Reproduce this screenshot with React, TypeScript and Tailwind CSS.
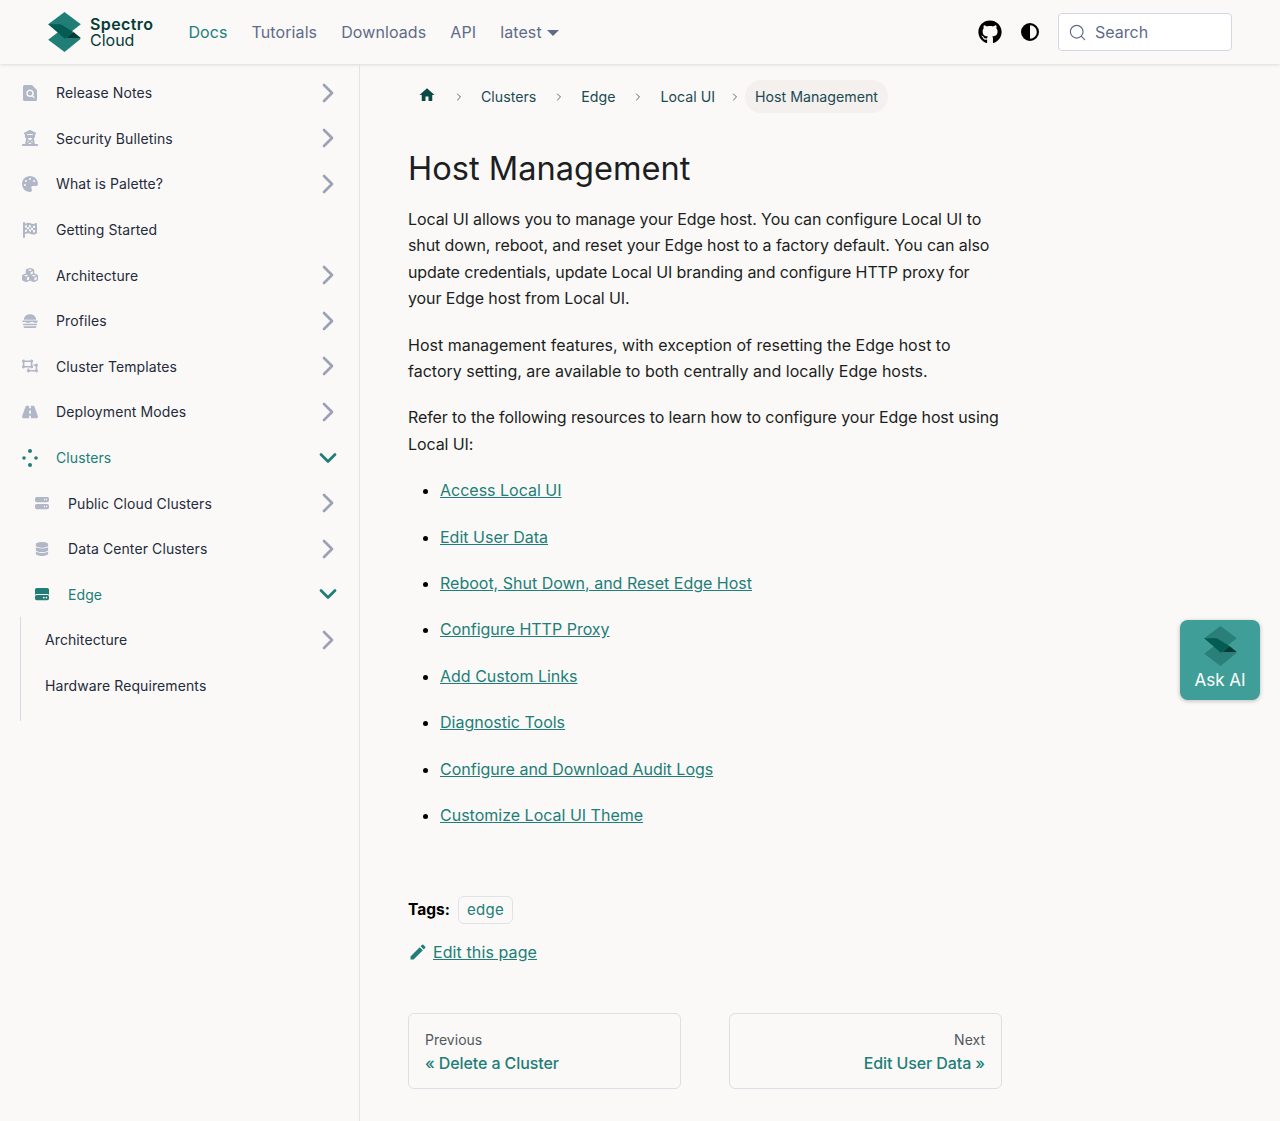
import { ChevronDown, ChevronRight, Search } from "lucide-react";
import type { IconType } from "react-icons";
import {
  FaCircleHalfStroke,
  FaCubes,
  FaDatabase,
  FaFlagCheckered,
  FaGithub,
  FaHardDrive,
  FaObjectUngroup,
  FaPalette,
  FaRoad,
  FaServer,
  FaTowerObservation,
} from "react-icons/fa6";
import { MdEdit, MdHome } from "react-icons/md";

const FONT = "font-['Inter','Noto_Sans',sans-serif]";

const ClusterDots = ({ className }: { className?: string }) => (
  <svg viewBox="0 0 16 18" className={className} fill="currentColor" preserveAspectRatio="xMidYMid meet">
    <circle cx="8" cy="2" r="2" />
    <circle cx="2" cy="9" r="1.8" />
    <circle cx="14" cy="9" r="1.8" />
    <circle cx="8" cy="16" r="2" />
  </svg>
);

const FileSearch = ({ className }: { className?: string }) => (
  <svg viewBox="0 0 14 16" className={className} fill="currentColor">
    <path
      fillRule="evenodd"
      d="M1.5 0H9l5 5v9.5a1.5 1.5 0 0 1-1.5 1.5h-11A1.5 1.5 0 0 1 0 14.5v-13A1.5 1.5 0 0 1 1.5 0ZM7 4.5a3.8 3.8 0 1 0 2.1 7l1.7 1.7 1-1-1.7-1.7A3.8 3.8 0 0 0 7 4.5Zm0 1.5a2.3 2.3 0 1 1 0 4.6A2.3 2.3 0 0 1 7 6Z"
    />
  </svg>
);

const ProfileStack = ({ className }: { className?: string }) => (
  <svg viewBox="0 0 17 16" className={className} fill="currentColor">
    <path d="M2 6.6C2 3 5 .8 8.5.8S15 3 15 6.6Z" />
    <path d="M.5 7.6h16v1.6c-1.5 1-2.7 1-4 .4-1.300-.6-2.700-.6-4 0-1.300.6-2.700.6-4 0-1.300-.6-2.700-.6-4 0Z" />
    <rect x="1" y="11" width="15" height="1.500" rx=".7" />
    <path d="M1.500 13.500h14c0 1.200-.8 2-2 2h-10c-1.200 0-2-.8-2-2Z" />
  </svg>
);

const Logo = ({ className, tone = "#217e77" }: { className?: string; tone?: string }) => (
  <svg viewBox="0 0 98 120" className={className}>
    <polygon points="49,0 98,37 49,75 0,37" fill={tone} />
    <polygon points="0,83 49,46 98,80 49,120" fill={tone} />
    <polygon points="0,37 38,37 76,60 50,80" fill="#035c54" />
    <polygon points="55,78 76,60 98,78" fill="#063c36" />
  </svg>
);

type NavItem = {
  label: string;
  icon?: IconType | typeof ClusterDots;
  state?: "closed" | "open";
  indent?: boolean;
  active?: boolean;
};

const topItems: NavItem[] = [
  { label: "Release Notes", icon: FileSearch, state: "closed" },
  { label: "Security Bulletins", icon: FaTowerObservation, state: "closed" },
  { label: "What is Palette?", icon: FaPalette, state: "closed" },
  { label: "Getting Started", icon: FaFlagCheckered },
  { label: "Architecture", icon: FaCubes, state: "closed" },
  { label: "Profiles", icon: ProfileStack, state: "closed" },
  { label: "Cluster Templates", icon: FaObjectUngroup, state: "closed" },
  { label: "Deployment Modes", icon: FaRoad, state: "closed" },
  { label: "Clusters", icon: ClusterDots, state: "open", active: true },
  { label: "Public Cloud Clusters", icon: FaServer, state: "closed", indent: true },
  { label: "Data Center Clusters", icon: FaDatabase, state: "closed", indent: true },
  { label: "Edge", icon: FaHardDrive, state: "open", indent: true, active: true },
];

const edgeItems: NavItem[] = [
  { label: "Architecture", state: "closed" },
  { label: "Hardware Requirements" },
];

const links = [
  "Access Local UI",
  "Edit User Data",
  "Reboot, Shut Down, and Reset Edge Host",
  "Configure HTTP Proxy",
  "Add Custom Links",
  "Diagnostic Tools",
  "Configure and Download Audit Logs",
  "Customize Local UI Theme",
];

const SideRow = ({ item }: { item: NavItem }) => {
  const Icon = item.icon;
  return (
    <div className={`flex h-[45.6px] items-center pr-[15px] ${item.indent ? "pl-[35px]" : item.icon ? "pl-[22px]" : "pl-[45px]"}`}>
      {Icon && (
        <span className={`flex shrink-0 ${item.indent ? "w-[33px]" : "w-[34px]"} ${item.active ? "text-[#217e77]" : "text-[#b2b7c7]"}`}>
          <Icon className={item.indent ? "h-[14px] w-[14px]" : item.label === "Clusters" ? "h-[18px] w-4" : "h-4 w-4"} />
        </span>
      )}
      <span className={`flex-1 text-[14px] tracking-[0.1px] ${item.active ? "text-[#217e77]" : "text-[#252b3a]"}`}>{item.label}</span>
      {item.state === "closed" && <ChevronRight className="h-8 w-8 text-[#9da1b5]" strokeWidth={2} />}
      {item.state === "open" && <ChevronDown className="mx-[2px] h-7 w-7 text-[#217e77]" strokeWidth={2.4} />}
    </div>
  );
};

const Crumb = ({ children }: { children: string }) => (
  <>
    <ChevronRight className="mx-[16.5px] h-3 w-3 text-[#5f6368]" />
    <span className="text-[14.2px] text-[#1b4a52]">{children}</span>
  </>
);

export default function App() {
  return (
    <div className={`relative h-[1121px] overflow-hidden bg-[#faf9f8] ${FONT}`}>
      <header className="flex h-[64px] items-center bg-[#faf9f8] pl-[48px] pr-[48px] shadow-[0_1px_3px_rgba(0,0,0,0.12)]">
        <Logo className="h-[40px] w-[33px]" />
        <div className="ml-[9px] flex flex-col text-[#063c36]">
          <span className="text-[16px] leading-[16px] font-semibold tracking-[0.4px]">Spectro</span>
          <span className="text-[16px] leading-[16px]">Cloud</span>
        </div>
        <nav className="ml-[35px] flex items-center gap-6 text-[16px] tracking-[0.1px] text-[#5f6b88]">
          <span className="text-[#217e77]">Docs</span>
          <span>Tutorials</span>
          <span>Downloads</span>
          <span>API</span>
          <span className="flex items-center gap-[5px]">
            latest
            <span className="mt-[2px] border-x-[6px] border-t-[6px] border-x-transparent border-t-[#5f6b88]" />
          </span>
        </nav>
        <div className="ml-auto flex items-center">
          <FaGithub className="h-6 w-6 text-black" />
          <FaCircleHalfStroke className="ml-[19px] h-[18px] w-[18px] text-black" />
          <div className="ml-[19px] flex h-[38px] w-[174px] items-center gap-2 rounded border border-[#d4d6e6] bg-white px-[9px] text-[16px] text-[#5f6b88]">
            <Search className="h-[19px] w-[19px]" strokeWidth={1.5} />
            Search
          </div>
        </div>
      </header>

      <div className="flex h-[1057px]">
        <aside className="w-[360px] shrink-0 border-r border-[#e3e3e5] pt-[6px]">
          {topItems.map((item) => (
            <SideRow key={item.label} item={item} />
          ))}
          <div className="ml-[20px] border-l border-[#d4d9e6] pb-[13px]">
            {edgeItems.map((item) => (
              <div key={item.label} className="-ml-[21px]">
                <SideRow item={item} />
              </div>
            ))}
          </div>
        </aside>

        <main className="w-[642px] pl-[48px] text-[#1c1e21]">
          <div className="mt-[16px] flex h-[33px] items-center">
            <MdHome className="ml-[10px] h-[18px] w-[18px] -translate-y-[2px] text-[#0b4a45]" />
            <Crumb>Clusters</Crumb>
            <Crumb>Edge</Crumb>
            <Crumb>Local UI</Crumb>
            <ChevronRight className="ml-[14px] mr-[4px] h-3 w-3 text-[#5f6368]" />
            <span className="rounded-full bg-[#f3f0ee] px-[10px] py-[7px] text-[14.2px] leading-[19px] text-[#1b4a52]">Host Management</span>
          </div>

          <h1 className="mt-[33px] text-[32.6px] leading-[44px] font-normal text-[#1c1e21]">Host Management</h1>

          <p className="mt-[16px] text-[16px] leading-[26.4px] tracking-[-0.1px]">
            Local UI allows you to manage your Edge host. You can configure Local UI to shut down, reboot, and reset your Edge host to a factory default. You can also update credentials, update Local UI branding and configure HTTP proxy for your Edge host from Local UI.
          </p>
          <p className="mt-[20px] text-[16px] leading-[26.4px]">
            Host management features, with exception of resetting the Edge host to factory setting, are available to both centrally and locally Edge hosts.
          </p>
          <p className="mt-[20px] text-[16px] leading-[26.4px] tracking-[-0.1px]">
            Refer to the following resources to learn how to configure your Edge host using Local UI:
          </p>

          <ul className="mt-[20px] list-disc pl-[32px] text-[16px] leading-[26.4px]">
            {links.map((link) => (
              <li key={link} className="mb-[20px] text-black marker:text-black">
                <span className="text-[#217e77] underline">{link}</span>
              </li>
            ))}
          </ul>

          <div className="mt-[67px] flex items-center gap-[8px]">
            <span className="text-[15.5px] font-bold text-black">Tags:</span>
            <span className="rounded-md border border-[#e0e2ea] px-2 py-[2px] text-[15px] tracking-[0.3px] text-[#217e77]">edge</span>
          </div>
          <div className="mt-[16px] flex items-center gap-[5px] text-[16px] tracking-[0.1px]">
            <MdEdit className="h-5 w-5 text-[#217e77]" />
            <span className="text-[#217e77] underline">Edit this page</span>
          </div>

          <div className="mt-[49px] grid grid-cols-2 gap-[48px]">
            <div className="rounded-md border border-[#dcdfe8] px-4 pt-[15px] pb-[12px]">
              <div className="text-[14px] leading-[21px] text-[#525860]">Previous</div>
              <div className="text-[16px] leading-[26px] font-medium tracking-[-0.1px] text-[#217e77]">« Delete a Cluster</div>
            </div>
            <div className="rounded-md border border-[#dcdfe8] px-4 pt-[15px] pb-[12px] text-right">
              <div className="text-[14px] leading-[21px] text-[#525860]">Next</div>
              <div className="text-[16px] leading-[26px] font-medium tracking-[-0.1px] text-[#217e77]">Edit User Data »</div>
            </div>
          </div>
        </main>
      </div>

      <div className="absolute top-[620px] left-[1180px] flex h-[80px] w-[80px] flex-col items-center rounded-lg bg-[#3f9e97] pt-[6px] shadow-[0_1px_4px_rgba(0,0,0,0.25)]">
        <Logo className="h-[40px] w-[33px]" tone="#2a8078" />
        <span className="mt-[2px] text-[17px] leading-6 text-white">Ask AI</span>
      </div>
    </div>
  );
}
